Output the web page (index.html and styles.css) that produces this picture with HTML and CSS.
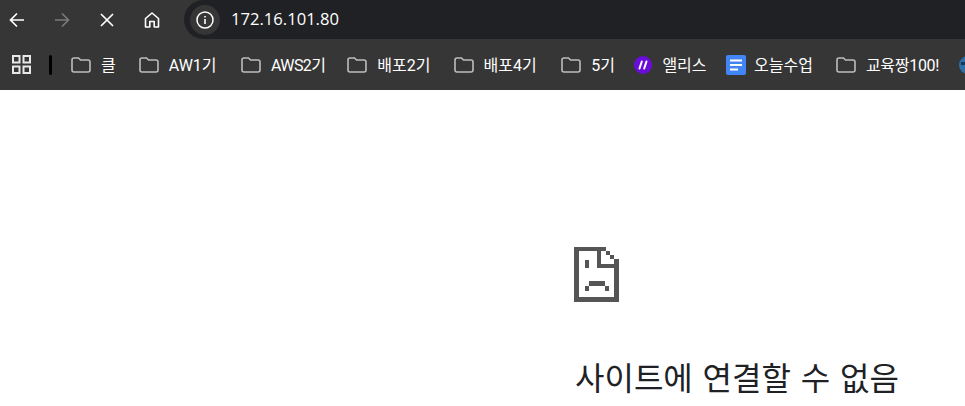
FILE: index.html
```html
<!DOCTYPE html>
<html>
    <head>
        <meta charset="utf-8">
        <title>172.16.101.80</title>
        <link rel="stylesheet" href="styles.css">
    </head>

    <body>
        <div class="toolbar">
            <div class="toolbar__nav">
                <svg class="toolbar__icon" viewBox="0 0 20 20"><path d="M17 10H4M10 3.5L3.5 10l6.500 6.500" fill="none" stroke="#fff" stroke-width="1.700"/></svg>
                <svg class="toolbar__icon" viewBox="0 0 20 20"><path d="M3 10h13M10 3.500l6.500 6.500-6.500 6.500" fill="none" stroke="#7b7b7b" stroke-width="1.700"/></svg>
                <svg class="toolbar__icon" viewBox="0 0 20 20"><path d="M4 4l12 12M16 4L4 16" fill="none" stroke="#fff" stroke-width="1.700"/></svg>
                <svg class="toolbar__icon" viewBox="0 0 20 20"><path d="M3.500 8.500L10 3l6.500 5.500V17h-4.300v-5.500H7.800V17H3.500z" fill="none" stroke="#fff" stroke-width="1.600" stroke-linejoin="round"/></svg>
            </div>
            <div class="address">
                <div class="address__info">
                    <svg width="20" height="20" viewBox="0 0 20 20"><circle cx="10" cy="10" r="8" fill="none" stroke="#fff" stroke-width="1.500"/><path d="M9.200 9h1.600v5H9.200zM9.200 6h1.600v1.600H9.200z" fill="#fff"/></svg>
                </div>
                <span class="address__url">172.16.101.80</span>
            </div>
        </div>

        <div class="bookmarks">
            <svg class="bookmarks__apps" viewBox="0 0 19 19"><path d="M1 1h6.500v6.500H1zM11.500 1H18v6.500h-6.500zM1 11.500h6.500V18H1zM11.500 11.500H18V18h-6.500z" fill="none" stroke="#e8e8e8" stroke-width="2"/></svg>
            <div class="bookmarks__sep"></div>

            <div class="bookmark">
                <svg class="bookmark__folder" viewBox="0 0 20 16"><use href="#folder"/></svg>
                <span>클</span>
            </div>
            <div class="bookmark bookmark--wide">
                <svg class="bookmark__folder" viewBox="0 0 20 16"><use href="#folder"/></svg>
                <span>AW1기</span>
            </div>
            <div class="bookmark bookmark--snug bookmark--condensed">
                <svg class="bookmark__folder" viewBox="0 0 20 16"><use href="#folder"/></svg>
                <span>AWS2기</span>
            </div>
            <div class="bookmark">
                <svg class="bookmark__folder" viewBox="0 0 20 16"><use href="#folder"/></svg>
                <span>배포2기</span>
            </div>
            <div class="bookmark bookmark--wide">
                <svg class="bookmark__folder" viewBox="0 0 20 16"><use href="#folder"/></svg>
                <span>배포4기</span>
            </div>
            <div class="bookmark bookmark--tight">
                <svg class="bookmark__folder" viewBox="0 0 20 16"><use href="#folder"/></svg>
                <span>5기</span>
            </div>
            <div class="bookmark bookmark--tight">
                <svg class="bookmark__logo" viewBox="0 0 18 18"><circle cx="9" cy="9" r="9" fill="#6a0ddb"/><path d="M7.800 5.500L5.500 12.500M12.500 5.500l-2.300 7" fill="none" stroke="#fff" stroke-width="2" stroke-linecap="round"/></svg>
                <span>앨리스</span>
            </div>
            <div class="bookmark">
                <svg class="bookmark__doc" viewBox="0 0 20 20"><rect width="20" height="20" rx="2" fill="#4285f4"/><path d="M4 4.500h12v2H4zM4 9h12v2H4zM4 13.500h8v2H4z" fill="#fff"/></svg>
                <span>오늘수업</span>
            </div>
            <div class="bookmark bookmark--tight bookmark--last">
                <svg class="bookmark__folder" viewBox="0 0 20 16"><use href="#folder"/></svg>
                <span>교육짱100!</span>
            </div>
            <svg class="bookmark__globe" viewBox="0 0 18 18"><circle cx="9" cy="9" r="9" fill="#2f6fa8"/><path d="M2 6h14v3H2z" fill="#16395a"/></svg>
        </div>

        <svg class="defs" width="0" height="0">
            <symbol id="folder" viewBox="0 0 20 16">
                <path d="M1 3a2 2 0 0 1 2-2h4.500l2 2H17a2 2 0 0 1 2 2v8a2 2 0 0 1-2 2H3a2 2 0 0 1-2-2z" fill="none" stroke="#bdbdbd" stroke-width="1.600"/>
            </symbol>
        </svg>

        <div class="error-page">
            <svg class="error-page__icon" viewBox="0 0 45 55">
                <path d="M0 0h32v4H27v13h18v38H0zM5 4v46h35V21H23V4zM32 4h4v4h-4zM36 8h4v4h-4zM40 12h5v5h-5z" fill="#555" fill-rule="evenodd"/>
                <path d="M11 13h4v8h-4zM15 34h16v5H15zM11 39h4v5h-4zM31 39h4v5h-4z" fill="#555"/>
            </svg>
            <h1 class="error-page__title">사이트에 연결할 수 없음</h1>
        </div>
    </body>
</html>
```

FILE: styles.css
```css
* {
    box-sizing: border-box;
}

body, html {
    margin: 0;
    height: 100%;
    overflow: hidden;
    background-color: #fff;
    font-family: "Open Sans", "Noto Sans CJK KR", sans-serif;
}

.toolbar {
    display: flex;
    height: 39px;
    background-color: #363636;
}

.toolbar__nav {
    display: flex;
    align-items: center;
    gap: 25px;
    width: 184px;
    padding-left: 7px;
}

.toolbar__icon {
    width: 20px;
    height: 20px;
}

.address {
    flex: 1;
    display: flex;
    align-items: center;
    background-color: #202124;
    border-radius: 20px 0 0 20px;
    padding-left: 6px;
}

.address__info {
    display: flex;
    align-items: center;
    justify-content: center;
    width: 30px;
    height: 30px;
    border-radius: 50%;
    background-color: #363636;
}

.address__url {
    margin-left: 11px;
    margin-bottom: 2px;
    font-size: 16.6px;
    color: #fff;
}

.bookmarks {
    display: flex;
    align-items: center;
    height: 51px;
    padding-left: 12px;
    background-color: #363636;
    white-space: nowrap;
}

.bookmarks__apps {
    width: 19px;
    height: 19px;
    flex: none;
}

.bookmarks__sep {
    width: 3px;
    height: 20px;
    margin: 0 19px 0 18px;
    border-radius: 2px;
    background-color: #000;
    flex: none;
}

.bookmark {
    display: flex;
    align-items: center;
    gap: 10px;
    margin-right: 23px;
    font-family: Roboto, "Noto Sans CJK KR", sans-serif;
    font-size: 16px;
    color: #fff;
    flex: none;
}

.bookmark--wide {
    margin-right: 24.5px;
}

.bookmark--snug {
    margin-right: 22px;
}

.bookmark--tight {
    margin-right: 19.5px;
}

.bookmark--condensed {
    letter-spacing: -0.6px;
}

.bookmark--last {
    letter-spacing: -0.3px;
}

.bookmark span {
    margin-bottom: 2px;
}

.bookmark__folder {
    width: 20px;
    height: 16px;
}

.bookmark__logo {
    width: 18px;
    height: 18px;
}

.bookmark__doc {
    width: 20px;
    height: 20px;
    margin-right: -2px;
}

.bookmark__globe {
    width: 18px;
    height: 18px;
    flex: none;
}

.defs {
    display: block;
    height: 0;
}

.error-page {
    padding: 157px 0 0 574px;
}

.error-page__icon {
    display: block;
    width: 45px;
    height: 55px;
}

.error-page__title {
    margin: 56px 0 0 1px;
    font-size: 32px;
    font-weight: 400;
    line-height: 40px;
    word-spacing: 1.500px;
    color: #202124;
    white-space: nowrap;
}
```
